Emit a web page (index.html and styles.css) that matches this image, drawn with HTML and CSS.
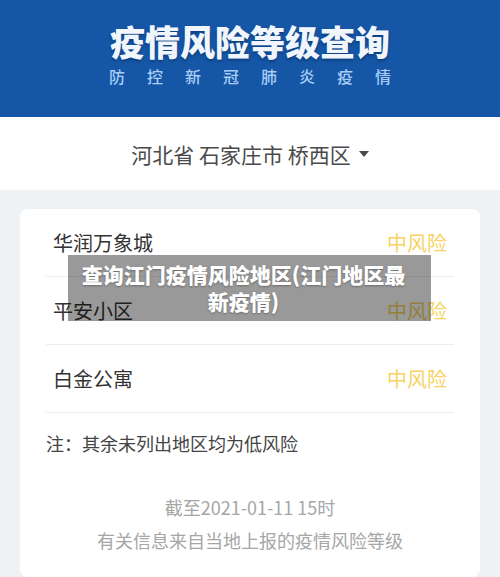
FILE: index.html
```html
<!DOCTYPE html>
<html lang="zh-CN">
<head>
    <meta charset="UTF-8">
    <meta name="viewport" content="width=device-width, initial-scale=1.0">
    <title>疫情风险等级查询</title>

    <link rel="stylesheet" href="styles.css">
</head>

<body>

<header class="banner">
    <h1>疫情风险等级查询</h1>
    <p class="subtitle">防控新冠肺炎疫情</p>
</header>

<div class="location">
    <span>河北省 石家庄市 桥西区</span>
    <i class="caret"></i>
</div>

<main class="content">
    <div class="card">
        <div class="risk-row">
            <span class="place">华润万象城</span>
            <span class="level">中风险</span>
        </div>
        <div class="risk-row">
            <span class="place">平安小区</span>
            <span class="level">中风险</span>
        </div>
        <div class="risk-row">
            <span class="place">白金公寓</span>
            <span class="level">中风险</span>
        </div>

        <p class="note">注：其余未列出地区均为低风险</p>

        <div class="source">
            <p>截至2021-01-11 15时</p>
            <p>有关信息来自当地上报的疫情风险等级</p>
        </div>
    </div>
</main>

<div class="caption">查询江门疫情风险地区(江门地区最新疫情)</div>

</body>
</html>
```

FILE: styles.css
```css
/* Base page: no margin, CJK sans font */
body {
    margin: 0;
    font-family: "Noto Sans CJK SC", "Noto Sans", sans-serif;
    background-color: #eef2f5;
}

/* Blue title banner at the top */
.banner {
    height: 117px;
    box-sizing: border-box;
    padding-top: 20px;
    background-color: #1557a6;
    text-align: center;
}

.banner h1 {
    margin: 0;
    font-size: 35px;
    line-height: 42px;
    font-weight: 900;
    color: #f1f6fd;
    text-shadow: 0 2px 3px rgba(0, 30, 80, 0.45);
}

.banner .subtitle {
    margin: 3px 0 0 22px;
    font-size: 16px;
    line-height: 22px;
    font-weight: 500;
    letter-spacing: 22px;
    color: #a9cdf6;
}

/* Province / city / district picker */
.location {
    height: 73px;
    display: flex;
    align-items: center;
    justify-content: center;
    background-color: #fff;
    font-size: 21px;
    color: #4a4a4a;
}

.location .caret {
    margin-left: 8px;
    border-left: 5px solid transparent;
    border-right: 5px solid transparent;
    border-top: 6px solid #4a4a4a;
}

/* Grey area holding the result card */
.content {
    padding: 19px 20px 0 20px;
}

.card {
    background-color: #fff;
    border-radius: 8px;
    padding: 0 26px 20px 26px;
}

.risk-row {
    height: 67px;
    display: flex;
    align-items: center;
    justify-content: space-between;
    padding: 0 7px;
    border-bottom: 1px solid #eeeeee;
    font-size: 20px;
}

.risk-row .place {
    color: #333;
}

.risk-row .level {
    color: #f6d463;
}

.note {
    margin: 0;
    padding-top: 17px;
    font-size: 18px;
    line-height: 26px;
    color: #444;
}

.source {
    margin-top: 35px;
    text-align: center;
    font-size: 18px;
    line-height: 33px;
    color: #a6a6a6;
}

.source p {
    margin: 0;
}

/* Dark caption laid over the card */
.caption {
    position: absolute;
    left: 68px;
    top: 255px;
    width: 363px;
    box-sizing: border-box;
    padding: 6px 18px 6px 6px;
    background-color: rgba(0, 0, 0, 0.4);
    color: #fff;
    font-size: 21px;
    font-weight: 900;
    line-height: 27px;
    text-align: center;
    text-shadow: 0 1px 2px rgba(0, 0, 0, 0.3);
}
```
